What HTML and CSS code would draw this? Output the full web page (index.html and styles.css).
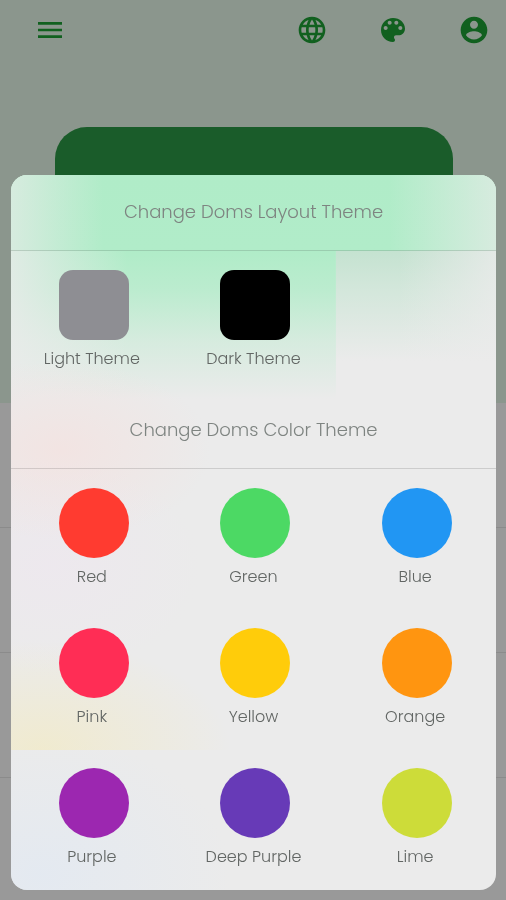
FILE: index.html
```html
<!DOCTYPE html>
<html lang="en">
<head>
<meta charset="utf-8">
<meta name="viewport" content="width=device-width, initial-scale=1">
<title>Doms Theme</title>
<link rel="stylesheet" href="styles.css">
</head>
<body>
<div class="page">
  <header class="hero">
    <nav class="toolbar">
      <button class="icon-button menu" type="button" aria-label="Menu">
        <svg viewBox="0 0 24 24"><path d="M3 18h18v-2H3v2zm0-5h18v-2H3v2zm0-7v2h18V6H3z"/></svg>
      </button>
      <button class="icon-button" type="button" aria-label="Language">
        <svg viewBox="0 0 24 24"><path d="M11.99 2C6.47 2 2 6.48 2 12s4.47 10 9.99 10C17.52 22 22 17.52 22 12S17.52 2 11.99 2zm6.93 6h-2.95c-.32-1.25-.78-2.45-1.38-3.56 1.84.63 3.37 1.91 4.33 3.56zM12 4.04c.83 1.2 1.48 2.53 1.91 3.96h-3.82c.43-1.43 1.08-2.76 1.91-3.96zM4.26 14C4.1 13.36 4 12.69 4 12s.1-1.36.26-2h3.38c-.08.66-.14 1.32-.14 2s.06 1.34.14 2H4.26zm.82 2h2.95c.32 1.25.78 2.45 1.38 3.56-1.84-.63-3.37-1.9-4.33-3.56zm2.95-8H5.08c.96-1.66 2.49-2.93 4.33-3.56C8.81 5.55 8.35 6.75 8.03 8zM12 19.96c-.83-1.2-1.48-2.53-1.91-3.96h3.82c-.43 1.43-1.08 2.76-1.91 3.96zM14.34 14H9.66c-.09-.66-.16-1.32-.16-2s.07-1.35.16-2h4.68c.09.65.16 1.32.16 2s-.07 1.34-.16 2zm.25 5.56c.6-1.11 1.06-2.31 1.38-3.56h2.95c-.96 1.65-2.49 2.93-4.33 3.56zM16.36 14c.08-.66.14-1.32.14-2s-.06-1.34-.14-2h3.38c.16.64.26 1.31.26 2s-.1 1.36-.26 2h-3.38z"/></svg>
      </button>
      <button class="icon-button" type="button" aria-label="Theme">
        <svg viewBox="0 0 24 24"><path d="M12 3c-4.97 0-9 4.03-9 9s4.03 9 9 9c.83 0 1.500-.67 1.500-1.500 0-.39-.15-.74-.39-1.010-.23-.26-.38-.61-.38-.99 0-.83.67-1.500 1.500-1.500H16c2.760 0 5-2.240 5-5 0-4.420-4.030-8-9-8zm-5.500 9c-.83 0-1.500-.67-1.500-1.500S5.670 9 6.500 9 8 9.670 8 10.500 7.330 12 6.500 12zm3-4C8.670 8 8 7.330 8 6.500S8.670 5 9.500 5s1.500.67 1.500 1.500S10.330 8 9.500 8zm5 0c-.83 0-1.500-.67-1.500-1.500S13.670 5 14.500 5s1.500.67 1.500 1.500S15.330 8 14.500 8zm3 4c-.83 0-1.500-.67-1.500-1.500S16.670 9 17.500 9s1.500.67 1.500 1.500-.67 1.500-1.500 1.500z"/></svg>
      </button>
      <button class="icon-button" type="button" aria-label="Account">
        <svg viewBox="0 0 24 24"><path d="M12 2C6.48 2 2 6.48 2 12s4.48 10 10 10 10-4.480 10-10S17.520 2 12 2zm0 3c1.660 0 3 1.340 3 3s-1.340 3-3 3-3-1.340-3-3 1.340-3 3-3zm0 14.200c-2.500 0-4.710-1.280-6-3.220.03-1.990 4-3.080 6-3.080 1.990 0 5.970 1.090 6 3.080-1.290 1.940-3.500 3.220-6 3.220z"/></svg>
      </button>
    </nav>
    <div class="card"></div>
  </header>
  <div class="rows">
    <div class="row"></div>
    <div class="row"></div>
    <div class="row"></div>
  </div>
</div>

<div class="overlay">
  <main class="sheet">
    <h2 class="heading">Change Doms Layout Theme</h2>
    <div class="options">
      <button class="option" type="button"><span class="swatch square light"></span>Light Theme</button>
      <button class="option" type="button"><span class="swatch square dark"></span>Dark Theme</button>
    </div>
    <h2 class="heading">Change Doms Color Theme</h2>
    <div class="options">
      <button class="option" type="button"><span class="swatch red"></span>Red</button>
      <button class="option" type="button"><span class="swatch green"></span>Green</button>
      <button class="option" type="button"><span class="swatch blue"></span>Blue</button>
      <button class="option" type="button"><span class="swatch pink"></span>Pink</button>
      <button class="option" type="button"><span class="swatch yellow"></span>Yellow</button>
      <button class="option" type="button"><span class="swatch orange"></span>Orange</button>
      <button class="option" type="button"><span class="swatch purple"></span>Purple</button>
      <button class="option" type="button"><span class="swatch deep-purple"></span>Deep Purple</button>
      <button class="option" type="button"><span class="swatch lime"></span>Lime</button>
    </div>
  </main>
</div>
</body>
</html>
```

FILE: styles.css
```css
* {
  box-sizing: border-box;
}

body {
  margin: 0;
  background: #999999;
  font-family: Poppins, Inter, "Open Sans", sans-serif;
  font-weight: 300;
}

button {
  margin: 0;
  padding: 0;
  border: 0;
  background: none;
  color: inherit;
  font: inherit;
}

.page {
  height: 100vh;
  overflow: hidden;
}

.hero {
  display: flex;
  flex-direction: column;
  height: 403px;
  background: #8b968d;
}

.toolbar {
  display: flex;
  align-items: center;
  gap: 49px;
  height: 60px;
  padding: 0 16px 0 34px;
}

.icon-button {
  width: 32px;
  height: 32px;
}

.icon-button svg {
  display: block;
  fill: #11601f;
}

.menu {
  margin-right: auto;
}

.card {
  flex: 1;
  margin: 67px 53px 0 55px;
  border-radius: 32px;
  background: #1a5c2a;
}

.row {
  height: 125px;
  border-bottom: 1px solid #8b8b8b;
}

.overlay {
  position: fixed;
  inset: 0;
  display: flex;
  flex-direction: column;
  justify-content: flex-end;
  padding: 0 10px 10px 11px;
}

.sheet {
  position: relative;
  overflow: hidden;
  padding-bottom: 1px;
  border-radius: 16px;
  background: #ebebeb;
}

/* Soft colour patches of the content behind the frosted sheet */
.sheet::before {
  content: "";
  position: absolute;
  inset: 0;
  background:
    radial-gradient(150px 90px at 50px 275px, rgba(248, 222, 219, 0.55), transparent),
    radial-gradient(150px 110px at 40px 390px, rgba(240, 228, 242, 0.4), transparent),
    linear-gradient(90deg, rgba(224, 235, 228, 0.8), rgba(235, 235, 235, 0) 19%, rgba(235, 235, 235, 0) 78%, rgba(224, 235, 228, 0.8)) 0 0 / 100% 76px no-repeat,
    linear-gradient(90deg, rgba(235, 235, 235, 0.8), rgba(235, 235, 235, 0) 24%, rgba(235, 235, 235, 0) 80%, rgba(235, 235, 235, 0.8)) 0 76px / 100% 164px no-repeat,
    linear-gradient(#b0ecc8, #b1ecc9) 0 0 / 100% 76px no-repeat,
    linear-gradient(rgba(176, 236, 200, 1), rgba(176, 236, 200, 0.82) 25%, rgba(176, 236, 200, 0.35) 62%, rgba(176, 236, 200, 0)) 0 76px / 67% 148px no-repeat,
    linear-gradient(rgba(190, 225, 204, 0.85), rgba(195, 228, 208, 0.6) 35%, rgba(200, 230, 212, 0)) 100% 76px / 33% 110px no-repeat,
    radial-gradient(190px 110px at 30px 110px, rgba(244, 234, 188, 0.6), transparent) 0 465px / 100% 110px no-repeat,
    radial-gradient(190px 140px at 30px 700px, rgba(226, 233, 242, 0.8), transparent);
}

.heading {
  position: relative;
  margin: 0;
  padding: 25px 16px 26px;
  border-bottom: 1px solid rgba(0, 0, 0, 0.13);
  color: #7e8481;
  font-size: 18px;
  font-weight: 300;
  line-height: 24px;
  text-align: center;
}

.options {
  position: relative;
  display: grid;
  grid-template-columns: repeat(3, 1fr);
}

.options + .heading {
  margin-top: 2px;
}

.option {
  display: flex;
  flex-direction: column;
  align-items: center;
  padding: 19px 0 20px;
  color: #626664;
  font-size: 16px;
  line-height: 24px;
}

.swatch {
  width: 70px;
  height: 70px;
  margin: 0 0 7px 4px;
  border-radius: 50%;
}

.square {
  border-radius: 14px;
}

.light { background: #8e8e93; }
.dark { background: #000000; }
.red { background: #ff3b30; }
.green { background: #4cd964; }
.blue { background: #2196f3; }
.pink { background: #ff2d55; }
.yellow { background: #ffcc0a; }
.orange { background: #ff9510; }
.purple { background: #9c27b0; }
.deep-purple { background: #673ab7; }
.lime { background: #cddc39; }
```
